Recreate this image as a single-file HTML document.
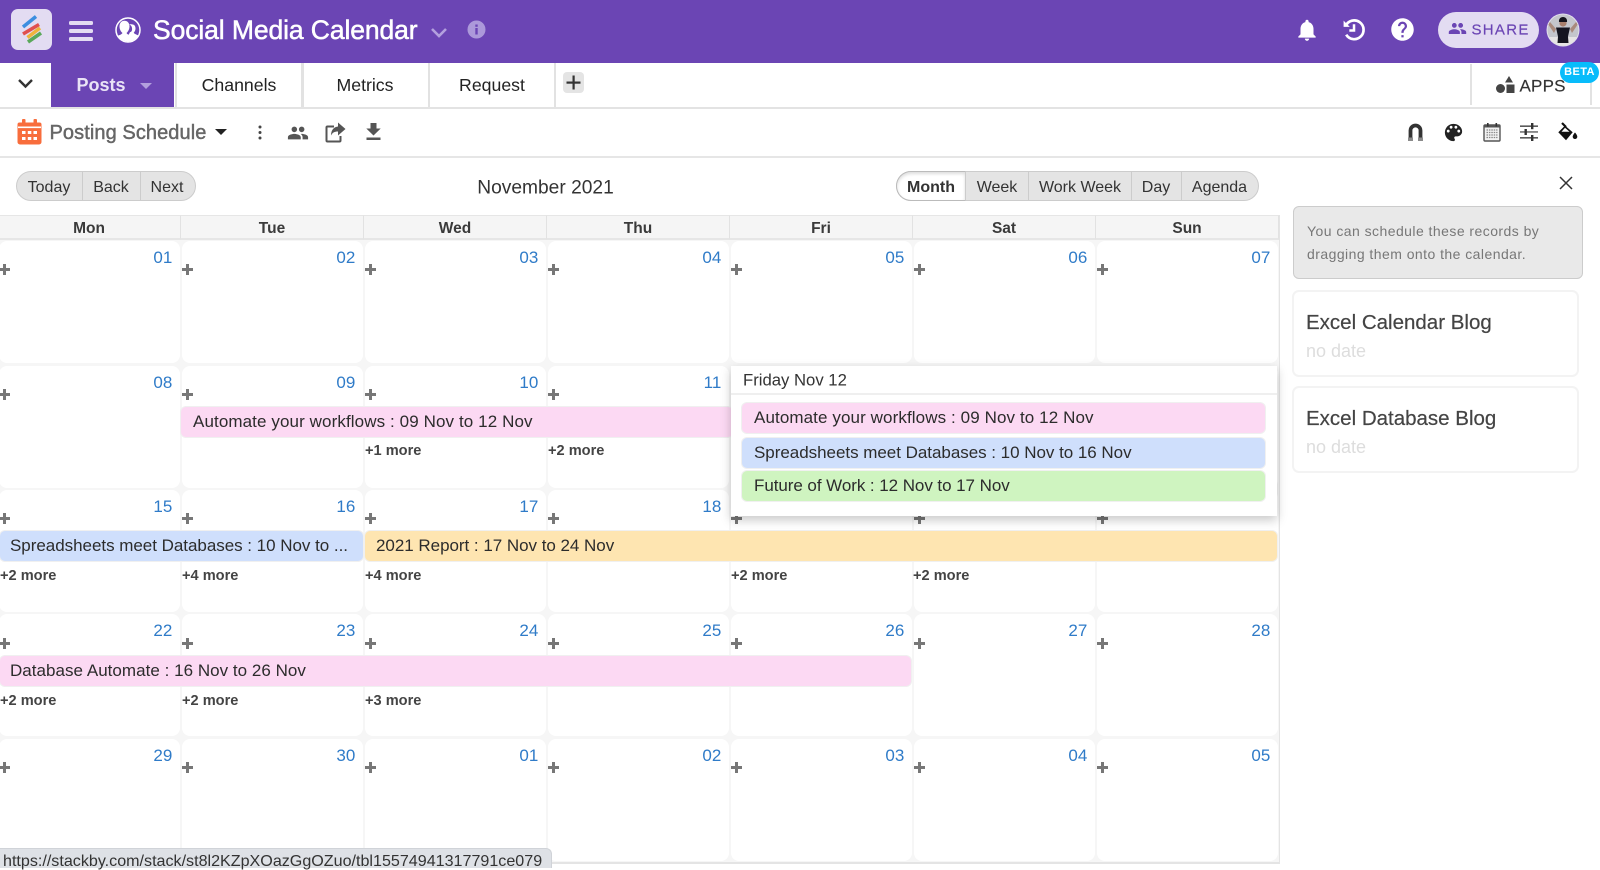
<!DOCTYPE html>
<html lang="en"><head><meta charset="utf-8"><title>Social Media Calendar</title>
<style>
*{box-sizing:border-box}
html,body{margin:0;padding:0;width:1600px;height:868px;overflow:hidden;background:#fff;font-family:"Liberation Sans",sans-serif;color:#333}
.a{position:absolute}
.t{position:absolute;white-space:nowrap;line-height:1;transform:translateY(-50%)}
.m{transform:translate(-50%,-50%)}
svg{position:absolute;display:block}
.tab{position:absolute;top:63px;height:44px;background:#fff;border-left:2px solid #e2e2e2;border-right:2px solid #e2e2e2}
#grid{position:absolute;left:-2px;top:240px;width:1281px;height:622px;display:grid;grid-template-columns:repeat(7,183px);grid-template-rows:repeat(5,124.4px);background:#f6f6f6}
.c{position:relative;background:#fff;margin:1.2px;border-radius:8px}
.c b{position:absolute;right:7.500px;top:8px;font-weight:400;font-size:17px;line-height:18px;color:#2f7bc8}
.c i{position:absolute;left:0;top:23.200px;width:11px;height:11px;background:linear-gradient(#777,#777) center/11px 3px no-repeat,linear-gradient(#777,#777) center/3px 11px no-repeat}
.d{position:absolute;top:215px;height:25px;background:#f5f5f5;border-right:1px solid #e2e2e2;border-top:1px solid #e6e6e6;border-bottom:2px solid #e6e6e6;text-align:center;font-weight:700;font-size:15.500px;line-height:25px;color:#3a3a3a}
.e{position:absolute;height:30px;border-radius:5px;font-size:17px;line-height:30px;color:#2c2c2c;white-space:nowrap;box-shadow:0 0 0 1px #f0f0f0}
.more{position:absolute;font-weight:700;font-size:14.600px;line-height:16px;color:#444;white-space:nowrap}
.g{position:absolute;top:171px;height:30px;background:#e4e4e4;border:1px solid #ccc;border-radius:15px}
.s{position:absolute;top:0;height:28px;width:1px;background:#ccc}
.card{position:absolute;left:1292px;width:287px;height:87px;border:2px solid #f3f3f3;border-radius:7px;background:#fff}
.b{font-size:16px;color:#333}
.tt{font-size:17.700px;color:#222}
</style></head><body>

<div class="a" style="left:0;top:0;width:1600px;height:62.500px;background:#6b45b4"></div>
<div class="a" style="left:11px;top:9px;width:41px;height:41px;background:#e3dcf2;border-radius:7px"></div>
<svg style="left:11px;top:10px" width="41" height="41" viewBox="0 0 41 41" fill="none" stroke-width="3.600"><path d="M12 17 25 6.500" stroke="#3d8ee0"/><path d="M12 24 28 14.500" stroke="#e0504f"/><path d="M16.500 27.500 29 18" stroke="#efb43c"/><path d="M17 32 30 23" stroke="#5aa85a"/></svg>
<svg style="left:69px;top:21px" width="24" height="20" viewBox="0 0 24 20" fill="#e3dcf2"><rect width="24" height="4" rx="1.500"/><rect y="8" width="24" height="4" rx="1.500"/><rect y="16" width="24" height="4" rx="1.500"/></svg>
<svg style="left:114px;top:16px" width="28" height="28" viewBox="0 0 28 28"><defs><clipPath id="pc"><circle cx="14" cy="14" r="11.500"/></clipPath></defs><circle cx="14" cy="14" r="12" fill="none" stroke="#fff" stroke-width="1.500"/><g clip-path="url(#pc)"><path d="M17 28c0-6-.5-7.500-2.500-9 .5-1 1.200-2 1.500-3 1 .5 1.800-1 2-2 .5-3-1-5-2.800-5.500 .8-.5 5-.5 5.800 1.500 1 2.500.5 5-1.300 6.700 1 1.800 5 2 8 5V28z" fill="#fff"/><path d="M1 28v-6c2-3 6-2.500 7.500-5-1.800-1.500-3-4-3-6.500C5.500 7 7.500 4.800 10.500 4.800s5 2.200 5 5.700c0 2.500-1.200 5-3 6.500 1.500 2.500 5 2 6 5v6z" fill="#fff"/></g></svg>
<div class="t" style="left:153px;top:30px;font-size:26.500px;color:#fff;-webkit-text-stroke:.5px #fff;letter-spacing:-.1px">Social Media Calendar</div>
<svg style="left:430px;top:27px" width="18" height="12" viewBox="0 0 18 12" fill="none" stroke="#b3a0de" stroke-width="2.600"><path d="M2 2l7 7 7-7"/></svg>
<svg style="left:467px;top:20px" width="19" height="19" viewBox="0 0 19 19"><circle cx="9.500" cy="9.500" r="9" fill="#ac99da"/><rect x="8.300" y="8" width="2.400" height="6.500" fill="#6b45b4"/><rect x="8.300" y="4.500" width="2.400" height="2.300" fill="#6b45b4"/></svg>
<svg style="left:1294px;top:17px" width="26" height="26" viewBox="0 0 24 24" fill="#fff"><path d="M12 22c1.100 0 2-.9 2-2h-4c0 1.100.9 2 2 2zm6-6v-5c0-3.070-1.630-5.640-4.500-6.320V4c0-.83-.67-1.500-1.500-1.500s-1.500.67-1.500 1.500v.68C7.640 5.360 6 7.920 6 11v5l-2 2v1h16v-1l-2-2z"/></svg>
<svg style="left:1341px;top:17px" width="25" height="25" viewBox="0 0 24 24" fill="none" stroke="#fff" stroke-width="2.600"><path d="M4.500 8.500A9 9 0 1 1 5 17"/><path d="M12.500 7v6H8" stroke-width="2.400"/><path d="M2.500 3.500v6h6" fill="#fff" stroke="none"/></svg>
<svg style="left:1388.500px;top:16px" width="27" height="27" viewBox="0 0 24 24" fill="#fff"><path d="M12 2C6.480 2 2 6.480 2 12s4.480 10 10 10 10-4.480 10-10S17.520 2 12 2zm1 17h-2v-2h2v2zm2.070-7.750l-.9.920C13.450 12.900 13 13.500 13 15h-2v-.5c0-1.100.45-2.100 1.170-2.830l1.240-1.260c.37-.36.59-.86.59-1.410 0-1.100-.9-2-2-2s-2 .9-2 2H8c0-2.210 1.790-4 4-4s4 1.790 4 4c0 .88-.36 1.680-.93 2.250z"/></svg>
<div class="a" style="left:1438px;top:12px;width:101px;height:36px;background:#e3dcf2;border-radius:18px"></div>
<svg style="left:1448px;top:19px" width="19" height="19" viewBox="0 0 24 24" fill="#6b45b4"><path d="M16 11c1.660 0 2.990-1.340 2.990-3S17.660 5 16 5c-1.660 0-3 1.340-3 3s1.340 3 3 3zm-8 0c1.660 0 2.990-1.340 2.990-3S9.660 5 8 5C6.340 5 5 6.340 5 8s1.340 3 3 3zm0 2c-2.330 0-7 1.170-7 3.500V19h14v-2.500c0-2.330-4.670-3.500-7-3.500zm8 0c-.29 0-.62.02-.97.05 1.160.84 1.970 1.970 1.970 3.450V19h6v-2.500c0-2.330-4.670-3.500-7-3.500z"/></svg>
<div class="t" style="left:1471.500px;top:30px;font-size:15px;letter-spacing:1.300px;color:#6b45b4;-webkit-text-stroke:.2px #6b45b4">SHARE</div>
<svg style="left:1546px;top:13px" width="34" height="34" viewBox="0 0 34 34"><defs><clipPath id="av"><circle cx="17" cy="17" r="15.500"/></clipPath></defs><circle cx="17" cy="17" r="16.500" fill="#e4e0ee"/><g clip-path="url(#av)"><rect width="34" height="34" fill="#c4c6cc"/><rect x="0" y="24" width="34" height="10" fill="#e6e4e4"/><path d="M10 16 4 9 2 11l6 9z" fill="#a98a7c"/><path d="M24 16l6-7 2 2-6 9z" fill="#a98a7c"/><path d="M10 14.500h14l-2 9 .5 6.500h-11l.500-6.500z" fill="#14141f"/><circle cx="17" cy="10" r="3.600" fill="#a87f6c"/><path d="M13 9c-.5-3 1.500-5 4-5s4.500 2 4 5z" fill="#14141c"/></g></svg>

<div class="a" style="left:0;top:106.500px;width:1600px;height:2px;background:#e3e3e3"></div>
<svg style="left:17px;top:78px" width="17" height="12" viewBox="0 0 17 12" fill="none" stroke="#333" stroke-width="2.400"><path d="M2 2l6.500 6.500L15 2"/></svg>
<div class="a" style="left:51px;top:62px;width:123px;height:45px;background:#6b45b4"></div>
<div class="t m" style="left:101px;top:85px;font-size:18px;font-weight:700;color:#e9e3f6">Posts</div>
<div class="a" style="left:140px;top:83px;border-left:6px solid transparent;border-right:6px solid transparent;border-top:6px solid #b3a0de"></div>
<div class="tab" style="left:175px;width:128px"></div>
<div class="tab" style="left:302px;width:128px"></div>
<div class="tab" style="left:428px;width:128px"></div>
<div class="t m tt" style="left:239px;top:86px">Channels</div>
<div class="t m tt" style="left:365px;top:86px">Metrics</div>
<div class="t m tt" style="left:492px;top:86px">Request</div>
<div class="a" style="left:563px;top:72px;width:21px;height:21px;background:#e4e4e4;border-radius:4px"></div>
<svg style="left:565px;top:74px" width="17" height="17" viewBox="0 0 17 17" fill="#333"><rect x="7.500" y="1.500" width="2.200" height="14"/><rect x="1.500" y="7.500" width="14" height="2.200"/></svg>
<div class="a" style="left:1470px;top:64px;width:2px;height:41px;background:#e2e2e2"></div>
<div class="a" style="left:1590px;top:64px;width:2px;height:41px;background:#e2e2e2"></div>
<svg style="left:1496px;top:75px" width="19" height="19" viewBox="0 0 19 19" fill="#444"><path d="M13 1l4 6.500H9z"/><circle cx="4.500" cy="13.500" r="4.500"/><rect x="10.500" y="9.500" width="8" height="8.500"/></svg>
<div class="t" style="left:1519.500px;top:85.500px;font-size:17px;letter-spacing:.2px;color:#333;-webkit-text-stroke:.15px #333">APPS</div>
<div class="a" style="left:1560px;top:62px;width:39px;height:21px;background:#08bcfb;border-radius:11px;color:#fff;font-size:11px;font-weight:700;line-height:21px;text-align:center;letter-spacing:.4px">BETA</div>

<svg style="left:17px;top:119px" width="25" height="26" viewBox="0 0 25 26"><path d="M2.500 3.500h20a2 2 0 0 1 2 2V23a2.500 2.500 0 0 1-2.500 2.500H3A2.500 2.500 0 0 1 .5 23V5.500a2 2 0 0 1 2-2z" fill="#f86d3c"/><rect x="5" y="0" width="3.500" height="6" rx="1" fill="#f86d3c"/><rect x="16.500" y="0" width="3.500" height="6" rx="1" fill="#f86d3c"/><rect x="1" y="7.500" width="23" height="1.600" fill="#fff"/><g fill="#fff"><rect x="5" y="12" width="3.500" height="3"/><rect x="10.800" y="12" width="3.500" height="3"/><rect x="16.500" y="12" width="3.500" height="3"/><rect x="5" y="18" width="3.500" height="3"/><rect x="10.800" y="18" width="3.500" height="3"/><rect x="16.500" y="18" width="3.500" height="3"/></g></svg>
<div class="t" style="left:49.500px;top:132.500px;font-size:20px;color:#666;-webkit-text-stroke:.45px #666;letter-spacing:.08px">Posting Schedule</div>
<div class="a" style="left:215px;top:129px;border-left:6px solid transparent;border-right:6px solid transparent;border-top:6px solid #222"></div>
<svg style="left:255.500px;top:124px" width="8" height="17" viewBox="0 0 8 17" fill="#444"><circle cx="4" cy="3" r="1.500"/><circle cx="4" cy="8.500" r="1.500"/><circle cx="4" cy="14" r="1.500"/></svg>
<svg style="left:287px;top:122px" width="22" height="22" viewBox="0 0 24 24" fill="#555"><path d="M16 11c1.660 0 2.990-1.340 2.990-3S17.660 5 16 5c-1.660 0-3 1.340-3 3s1.340 3 3 3zm-8 0c1.660 0 2.990-1.340 2.990-3S9.660 5 8 5C6.340 5 5 6.340 5 8s1.340 3 3 3zm0 2c-2.330 0-7 1.170-7 3.500V19h14v-2.500c0-2.330-4.670-3.500-7-3.500zm8 0c-.29 0-.62.02-.97.05 1.160.84 1.970 1.970 1.970 3.450V19h6v-2.500c0-2.330-4.670-3.500-7-3.500z"/></svg>
<svg style="left:325px;top:122px" width="21" height="21" viewBox="0 0 21 21"><path d="M9 4.500H2.500a1 1 0 0 0-1 1v13a1 1 0 0 0 1 1h12a1 1 0 0 0 1-1V14" fill="none" stroke="#555" stroke-width="2"/><path d="M13 .500l7.500 6.500-7.500 6.500V9.500c-3.500 0-5.500 1-7 4 0-5 2.500-8.500 7-9z" fill="#555"/></svg>
<svg style="left:366px;top:123px" width="15" height="17" viewBox="0 0 15 17" fill="#555"><path d="M4.500 0h6v5.500h4.200L7.500 12.500.3 5.500h4.200zM.5 14.500h14V17H.5z"/></svg>
<svg style="left:1407px;top:122px" width="17" height="20" viewBox="0 0 17 20"><path d="M3.500 18V8.500a5 5 0 0 1 10 0V18" fill="none" stroke="#333" stroke-width="3.800"/><rect x="1" y="15.500" width="5" height="3.500" fill="#8a8a8a"/><rect x="11" y="15.500" width="5" height="3.500" fill="#8a8a8a"/></svg>
<svg style="left:1441.500px;top:120.500px" width="23" height="23" viewBox="0 0 24 24" fill="#222"><path d="M12 3c-4.970 0-9 4.030-9 9s4.030 9 9 9c.83 0 1.500-.67 1.500-1.500 0-.39-.15-.74-.39-1.010-.23-.26-.38-.61-.38-.99 0-.83.67-1.500 1.500-1.500H16c2.760 0 5-2.240 5-5 0-4.420-4.030-8-9-8zm-5.500 9c-.83 0-1.500-.67-1.500-1.500S5.670 9 6.500 9 8 9.670 8 10.500 7.330 12 6.500 12zm3-4C8.670 8 8 7.330 8 6.500S8.670 5 9.500 5s1.500.67 1.500 1.500S10.330 8 9.500 8zm5 0c-.83 0-1.500-.67-1.500-1.500S13.670 5 14.500 5s1.500.67 1.500 1.500S15.330 8 14.500 8zm3 4c-.83 0-1.500-.67-1.500-1.500S16.670 9 17.500 9s1.500.67 1.500 1.500-.67 1.500-1.500 1.500z"/></svg>
<svg style="left:1483px;top:122px" width="18" height="20" viewBox="0 0 18 20"><rect x="1" y="3" width="16" height="16" rx="1" fill="#f2f2f2" stroke="#555" stroke-width="1.400"/><rect x="1" y="3" width="16" height="2.500" fill="#555"/><rect x="4" y="1" width="1.600" height="3.500" fill="#333"/><rect x="12.500" y="1" width="1.600" height="3.500" fill="#333"/><path d="M3.500 8h11M3.500 10.500h11M3.500 13h11M3.500 15.500h11" stroke="#888" stroke-width="1.200" stroke-dasharray="1.500 .9"/></svg>
<svg style="left:1520px;top:123px" width="18" height="18" viewBox="0 0 18 18" fill="#333"><rect y="2.500" width="18" height="1.300"/><rect x="11" y="0" width="2.400" height="6.200"/><rect y="8.300" width="18" height="1.300" fill="#555"/><rect x="4.500" y="6" width="2.400" height="6"/><rect y="14.200" width="18" height="1.300"/><rect x="11" y="12" width="2.400" height="6"/></svg>
<svg style="left:1557px;top:122px" width="21" height="20" viewBox="0 0 21 20"><path d="M1.300 10.300 8 3.600 15.700 10.300 9 18.300z" fill="#111"/><path d="M4.500 9.800h8L8 5.800z" fill="#fff"/><path d="M5 1 9 5" stroke="#111" stroke-width="2.200"/><path d="M18 10.500s-2.300 2.600-2.300 4.200a2.300 2.300 0 0 0 4.600 0c0-1.600-2.300-4.200-2.300-4.200z" fill="#111"/></svg>
<div class="a" style="left:0;top:156px;width:1600px;height:2px;background:#e6e6e6"></div>

<div class="g" style="left:16px;width:180px"><span class="s" style="left:65px"></span><span class="s" style="left:123px"></span></div>
<div class="t m b" style="left:49px;top:188px">Today</div>
<div class="t m b" style="left:111px;top:188px">Back</div>
<div class="t m b" style="left:167px;top:188px">Next</div>
<div class="t m" style="left:545.500px;top:188px;font-size:19.200px;color:#333">November 2021</div>
<div class="g" style="left:896px;width:363px"><span class="s" style="left:131px"></span><span class="s" style="left:234px"></span><span class="s" style="left:284px"></span></div>
<div class="a" style="left:896px;top:171px;width:70px;height:30px;background:#fff;border:1px solid #bbb;border-right:1px solid #ccc;border-radius:15px 0 0 15px;box-shadow:inset 0 2px 3px #ddd"></div>
<div class="t m b" style="left:931px;top:188px;font-weight:700;">Month</div>
<div class="t m b" style="left:997px;top:188px">Week</div>
<div class="t m b" style="left:1080px;top:188px">Work Week</div>
<div class="t m b" style="left:1156px;top:188px">Day</div>
<div class="t m b" style="left:1219.500px;top:188px">Agenda</div>

<div class="d" style="left:-2px;width:183px">Mon</div>
<div class="d" style="left:181px;width:183px">Tue</div>
<div class="d" style="left:364px;width:183px">Wed</div>
<div class="d" style="left:547px;width:183px">Thu</div>
<div class="d" style="left:730px;width:183px">Fri</div>
<div class="d" style="left:913px;width:183px">Sat</div>
<div class="d" style="left:1096px;width:183px">Sun</div>

<div id="grid">
<div class="c"><b>01</b><i></i></div><div class="c"><b>02</b><i></i></div><div class="c"><b>03</b><i></i></div><div class="c"><b>04</b><i></i></div><div class="c"><b>05</b><i></i></div><div class="c"><b>06</b><i></i></div><div class="c"><b>07</b><i></i></div>
<div class="c"><b>08</b><i></i></div><div class="c"><b>09</b><i></i></div><div class="c"><b>10</b><i></i></div><div class="c"><b>11</b><i></i></div><div class="c"><b>12</b><i></i></div><div class="c"><b>13</b><i></i></div><div class="c"><b>14</b><i></i></div>
<div class="c"><b>15</b><i></i></div><div class="c"><b>16</b><i></i></div><div class="c"><b>17</b><i></i></div><div class="c"><b>18</b><i></i></div><div class="c"><b>19</b><i></i></div><div class="c"><b>20</b><i></i></div><div class="c"><b>21</b><i></i></div>
<div class="c"><b>22</b><i></i></div><div class="c"><b>23</b><i></i></div><div class="c"><b>24</b><i></i></div><div class="c"><b>25</b><i></i></div><div class="c"><b>26</b><i></i></div><div class="c"><b>27</b><i></i></div><div class="c"><b>28</b><i></i></div>
<div class="c"><b>29</b><i></i></div><div class="c"><b>30</b><i></i></div><div class="c"><b>01</b><i></i></div><div class="c"><b>02</b><i></i></div><div class="c"><b>03</b><i></i></div><div class="c"><b>04</b><i></i></div><div class="c"><b>05</b><i></i></div>
</div>
<div class="a" style="left:1278.500px;top:215px;width:1.500px;height:649px;background:#e4e4e4"></div>
<div class="a" style="left:0;top:862px;width:1280px;height:2px;background:#e4e4e4"></div>

<div class="e" style="left:181px;top:407px;width:552px;background:#fcd9f3;padding-left:12px;letter-spacing:.1px">Automate your workflows : 09 Nov to 12 Nov</div>
<div class="more" style="left:365px;top:443px">+1 more</div>
<div class="more" style="left:548px;top:443px">+2 more</div>

<div class="e" style="left:0;top:531px;width:363px;background:#cfdffc;padding-left:10px;letter-spacing:-.03px">Spreadsheets meet Databases : 10 Nov to ...</div>
<div class="e" style="left:365px;top:531px;width:912px;background:#fee5b1;padding-left:11px;letter-spacing:-.03px">2021 Report : 17 Nov to 24 Nov</div>
<div class="more" style="left:0;top:568px">+2 more</div>
<div class="more" style="left:182px;top:568px">+4 more</div>
<div class="more" style="left:365px;top:568px">+4 more</div>
<div class="more" style="left:731px;top:568px">+2 more</div>
<div class="more" style="left:913px;top:568px">+2 more</div>

<div class="e" style="left:0;top:656px;width:911px;background:#fcd9f3;padding-left:10px;letter-spacing:.03px">Database Automate : 16 Nov to 26 Nov</div>
<div class="more" style="left:0;top:693px">+2 more</div>
<div class="more" style="left:182px;top:693px">+2 more</div>
<div class="more" style="left:365px;top:693px">+3 more</div>

<div class="a" style="left:731px;top:366px;width:546px;height:150px;background:#fff;box-shadow:0 4px 10px rgba(0,0,0,.22)"></div>
<div class="t" style="left:743px;top:381px;font-size:16.700px;color:#333">Friday Nov 12</div>
<div class="a" style="left:731px;top:393px;width:546px;height:2px;background:#efefef"></div>
<div class="e" style="left:742px;top:403px;width:523px;background:#fcd9f3;padding-left:12px;letter-spacing:.1px">Automate your workflows : 09 Nov to 12 Nov</div>
<div class="e" style="left:742px;top:437.500px;width:523px;background:#cfdffc;padding-left:12px;letter-spacing:-.03px">Spreadsheets meet Databases : 10 Nov to 16 Nov</div>
<div class="e" style="left:742px;top:471px;width:523px;background:#cff4c0;padding-left:12px;letter-spacing:-.06px">Future of Work : 12 Nov to 17 Nov</div>

<svg style="left:1558px;top:175px" width="16" height="16" viewBox="0 0 16 16" fill="none" stroke="#333" stroke-width="1.500"><path d="M2 2l12 12M14 2L2 14"/></svg>
<div class="a" style="left:1293px;top:206px;width:290px;height:73px;background:#e9e9e9;border:1px solid #ccc;border-radius:6px"></div>
<div class="t" style="left:1307px;top:231px;font-size:14px;letter-spacing:.45px;color:#777">You can schedule these records by</div>
<div class="t" style="left:1307px;top:254px;font-size:14px;letter-spacing:.45px;color:#777">dragging them onto the calendar.</div>
<div class="card" style="top:290px"></div>
<div class="t" style="left:1306px;top:323px;font-size:20.500px;color:#444;-webkit-text-stroke:.2px #444">Excel Calendar Blog</div>
<div class="t" style="left:1306px;top:351px;font-size:18px;color:#ddd">no date</div>
<div class="card" style="top:386px"></div>
<div class="t" style="left:1306px;top:419px;font-size:20.500px;color:#444;-webkit-text-stroke:.2px #444">Excel Database Blog</div>
<div class="t" style="left:1306px;top:447px;font-size:18px;color:#ddd">no date</div>

<div class="a" style="left:0;top:848px;width:552px;height:20px;background:#dee1e6;border:1px solid #d0d3d8;border-left:0;border-bottom:0;border-radius:0 6px 0 0"></div>
<div class="t" style="left:3px;top:861px;font-size:16.100px;color:#333">https://stackby.com/stack/st8l2KZpXOazGgOZuo/tbl15574941317791ce079</div>
</body></html>
